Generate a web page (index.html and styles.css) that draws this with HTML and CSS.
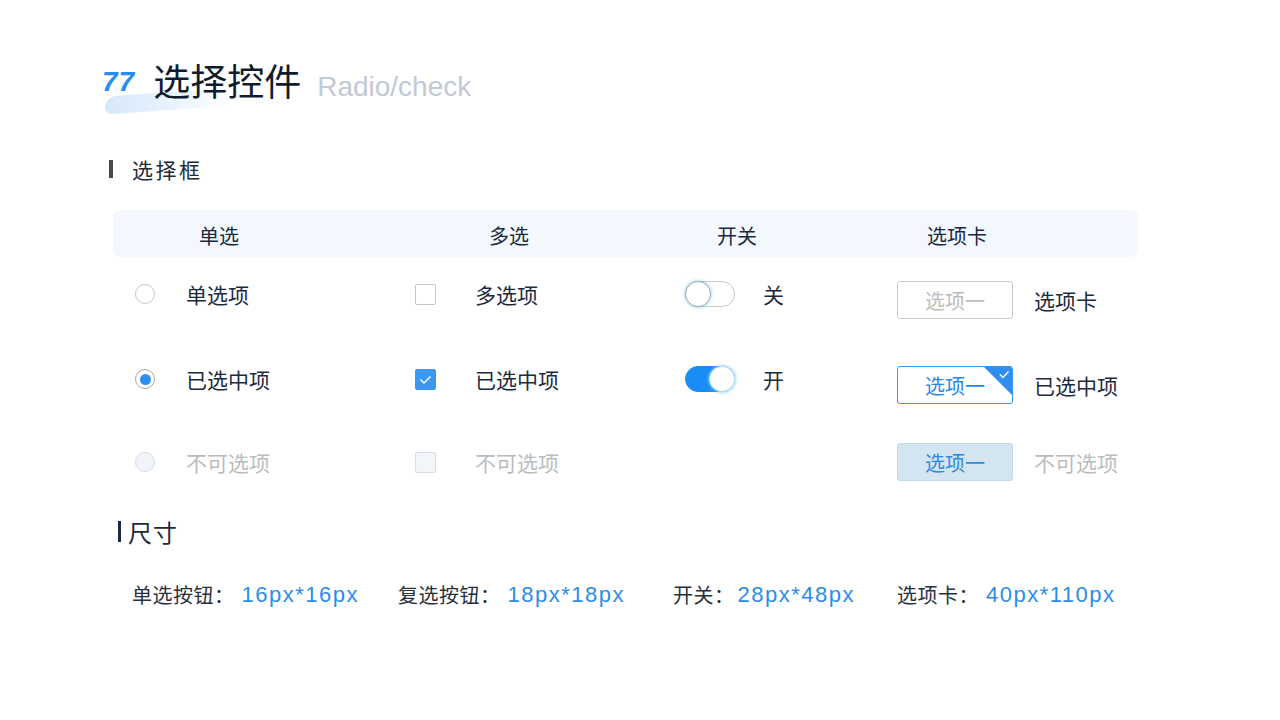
FILE: index.html
```html
<!DOCTYPE html>
<html lang="zh">
<head>
<meta charset="utf-8">
<title>选择控件</title>
<link rel="stylesheet" href="styles.css">
</head>
<body>
<div class="page">
  <div class="title">
    <span class="swash"></span>
    <span class="mark">77</span>
    <h1 class="title-cn">选择控件</h1>
    <span class="title-en">Radio/check</span>
  </div>

  <div class="sec sec-1"><span class="sec-bar"></span>选择框</div>

  <div class="table">
    <div class="thead">
      <div class="cell c1"><span class="th th1">单选</span></div>
      <div class="cell c2"><span class="th th2">多选</span></div>
      <div class="cell c3"><span class="th th3">开关</span></div>
      <div class="cell c4"><span class="th th4">选项卡</span></div>
    </div>

    <div class="row r1">
      <div class="cell c1"><span class="radio"></span><span class="lbl lbl-r">单选项</span></div>
      <div class="cell c2"><span class="check"></span><span class="lbl lbl-c">多选项</span></div>
      <div class="cell c3"><span class="toggle"><span class="knob"></span></span><span class="lbl lbl-t">关</span></div>
      <div class="cell c4 shift"><span class="tab">选项一</span><span class="lbl lbl-k">选项卡</span></div>
    </div>

    <div class="row r2">
      <div class="cell c1"><span class="radio on"></span><span class="lbl lbl-r">已选中项</span></div>
      <div class="cell c2"><span class="check on"><svg viewBox="0 0 21 21" width="21" height="21"><path d="M5.5 10.5 L9 14 L15.5 7.5" fill="none" stroke="#fff" stroke-width="1.4"/></svg></span><span class="lbl lbl-c">已选中项</span></div>
      <div class="cell c3"><span class="toggle on"><span class="knob"></span></span><span class="lbl lbl-t">开</span></div>
      <div class="cell c4 shift"><span class="tab on">选项一<svg class="corner" viewBox="0 0 28 28" width="28" height="28"><path d="M0 0 H28 V28 Z" fill="#2f8ff0"/><path d="M16 7.5 L19 10.5 L24.5 4.5" fill="none" stroke="#fff" stroke-width="1.5"/></svg></span><span class="lbl lbl-k">已选中项</span></div>
    </div>

    <div class="row r3">
      <div class="cell c1"><span class="radio off"></span><span class="lbl lbl-r dis">不可选项</span></div>
      <div class="cell c2"><span class="check off"></span><span class="lbl lbl-c dis">不可选项</span></div>
      <div class="cell c3"></div>
      <div class="cell c4"><span class="tab off">选项一</span><span class="lbl lbl-k dis">不可选项</span></div>
    </div>
  </div>

  <div class="sec sec-2"><span class="sec-bar2"></span>尺寸</div>

  <div class="sizes">
    <div class="size s1"><span class="sk">单选按钮：</span><span class="sv">16px*16px</span></div>
    <div class="size s2"><span class="sk">复选按钮：</span><span class="sv">18px*18px</span></div>
    <div class="size s3"><span class="sk">开关：</span><span class="sv">28px*48px</span></div>
    <div class="size s4"><span class="sk">选项卡：</span><span class="sv">40px*110px</span></div>
  </div>
</div>
</body>
</html>
```

FILE: styles.css
```css
* { box-sizing: border-box; }
html, body { margin: 0; padding: 0; background: #fff; }
body {
  width: 1280px;
  height: 720px;
  overflow: hidden;
  font-family: "Noto Sans CJK SC", "Noto Sans", sans-serif;
  color: #1c2a3e;
}
.page { padding-top: 58px; }

/* title */
.title {
  position: relative;
  display: flex;
  align-items: baseline;
  margin-left: 102px;
  height: 44px;
}
.swash {
  position: absolute;
  left: 3px;
  top: 34px;
  width: 130px;
  height: 18px;
  border-radius: 9px;
  transform: rotate(-4deg) skewX(-15deg);
  background: linear-gradient(90deg, #d6e8fb 0%, #e6f1fd 45%, rgba(240,247,255,0) 100%);
}
.mark {
  position: relative;
  font-family: "Liberation Sans", sans-serif;
  font-weight: bold;
  font-style: italic;
  font-size: 28px;
  line-height: 44px;
  color: #2a8cf0;
  letter-spacing: 1px;
  transform: translateY(-5px);
}
.title-cn {
  position: relative;
  margin: 0 0 0 18px;
  font-size: 37px;
  font-weight: 400;
  line-height: 44px;
  color: #101c2e;
}
.title-en {
  position: relative;
  margin-left: 16px;
  font-family: "Liberation Sans", sans-serif;
  font-size: 28px;
  color: #c2c9d6;
}

/* sections */
.sec {
  display: flex;
  align-items: center;
}
.sec-1 {
  margin: 53px 0 0 109px;
  height: 28px;
  font-size: 21px;
  letter-spacing: 2.5px;
  color: #222a36;
}
.sec-bar {
  width: 4px;
  height: 18px;
  background: #444a52;
  margin-right: 19px;
}
.sec-2 {
  margin: 18px 0 0 118px;
  height: 32px;
  font-size: 24px;
  letter-spacing: 1px;
  color: #1c2a3e;
}
.sec-bar2 {
  width: 3px;
  height: 21px;
  background: #1c2a4a;
  margin-right: 7px;
}

/* table */
.table {
  margin: 27px 0 0 113px;
  width: 1025px;
}
.thead, .row {
  display: grid;
  grid-template-columns: 280px 270px 210px 265px;
  align-items: center;
}
.thead {
  height: 47px;
  padding-top: 4px;
  background: #f3f8fe;
  border-radius: 7px;
}
.th { font-size: 20px; color: #1a2840; }
.th1 { padding-left: 86px; }
.th2 { padding-left: 96px; }
.th3 { padding-left: 54px; }
.th4 { padding-left: 54px; }

.r1 { height: 74px; }
.r2 { height: 96px; }
.r3 { height: 70px; }

.cell { display: flex; align-items: center; }
.row .c1 { padding-left: 22px; }
.row .c2 { padding-left: 22px; }
.row .c3 { padding-left: 22px; }
.row .c4 { padding-left: 24px; }
.row .shift { padding-top: 12px; }

.lbl { font-size: 21px; color: #1c2a3e; line-height: 28px; }
.lbl.dis { color: #b9bcc0; }
.lbl-r { margin-left: 31px; }
.lbl-c { margin-left: 39px; }
.lbl-t { margin-left: 28px; }
.lbl-k { margin-left: 21px; }

/* radio */
.radio {
  width: 20px;
  height: 20px;
  border-radius: 50%;
  border: 1px solid #c6c6c6;
  background: #fff;
  display: flex;
  align-items: center;
  justify-content: center;
}
.radio.on { border-color: #a9a9a9; }
.radio.on::after {
  content: "";
  width: 11px;
  height: 11px;
  border-radius: 50%;
  background: #2f8ff0;
}
.radio.off { background: #f1f5fa; border-color: #d7dce2; }

/* checkbox */
.check {
  width: 21px;
  height: 21px;
  border: 1px solid #c6c6c6;
  border-radius: 2px;
  background: #fff;
  display: flex;
}
.check.on { background: #3d97ee; border-color: #3d97ee; }
.check.on svg { margin: -1px; }
.check.off { background: #f2f5f9; border-color: #d9dee4; }

/* toggle */
.toggle {
  position: relative;
  width: 50px;
  height: 26px;
  border-radius: 13px;
  border: 1px solid #c9c9c9;
  background: #fff;
  display: flex;
  align-items: center;
}
.toggle .knob {
  width: 26px;
  height: 26px;
  margin-left: -1px;
  border-radius: 50%;
  background: #fff;
  border: 1px solid #a9a9a9;
  box-shadow: 0 0 3px 1px rgba(120, 205, 240, 0.55);
}
.toggle.on {
  background: #1a8cf5;
  border-color: #1a8cf5;
  justify-content: flex-end;
}
.toggle.on .knob {
  margin: 0 -1px 0 0;
  border-color: #bfe3f6;
  box-shadow: 0 0 3px 1px rgba(120, 205, 240, 0.7);
}

/* tabs */
.tab {
  position: relative;
  width: 116px;
  height: 38px;
  border: 1px solid #c8c8c8;
  border-radius: 3px;
  display: flex;
  align-items: center;
  justify-content: center;
  font-size: 20px;
  color: #bcbcbc;
  overflow: hidden;
}
.tab.on {
  border-color: #3a94ef;
  color: #2a88e8;
}
.tab .corner {
  position: absolute;
  top: 0;
  right: 0;
}
.tab.off {
  background: #d2e5f0;
  border-color: #c3dbe9;
  color: #2e8ae0;
}

/* sizes */
.sizes {
  margin: 33px 0 0 132px;
  display: grid;
  grid-template-columns: 266px 275px 224px auto;
  align-items: center;
  height: 28px;
}
.size { display: flex; align-items: center; white-space: nowrap; }
.sk { font-size: 20px; color: #27303c; letter-spacing: 0.5px; }
.sv {
  font-family: "Liberation Sans", sans-serif;
  font-size: 22px;
  color: #2d8cea;
  letter-spacing: 1.5px;
  margin-left: 7px;
}
.s3 .sv { margin-left: 3px; }
```
